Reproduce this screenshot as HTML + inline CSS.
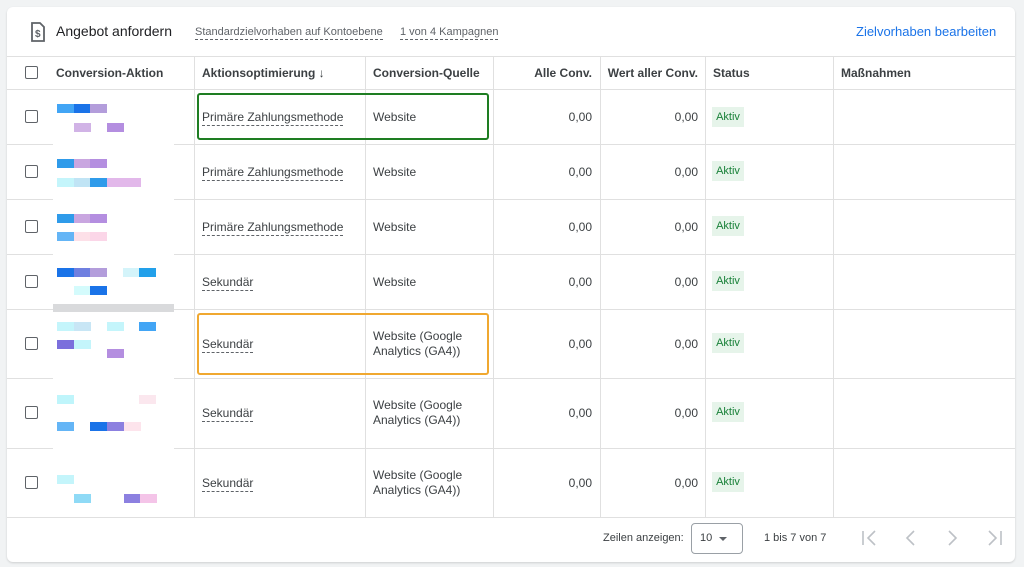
<!DOCTYPE html>
<html><head><meta charset="utf-8"><style>
*{margin:0;padding:0;box-sizing:border-box}
body{width:1024px;height:567px;background:#f1f3f4;font-family:"Liberation Sans",Arial,sans-serif;position:relative;overflow:hidden;color:#3c4043}
.card{position:absolute;left:7px;top:7px;width:1008px;height:555px;background:#fff;border-radius:6px;box-shadow:0 1px 2px rgba(0,0,0,.15)}
.a{position:absolute}
.h{position:absolute;height:1px;background:#e0e0e0;left:7px;width:1008px}
.v{position:absolute;width:1px;background:#e0e0e0;top:57px;height:460px}
.cb{position:absolute;left:25px;width:13px;height:13px;border:1.6px solid #5f6368;border-radius:2px}
.t{position:absolute;font-size:12px;color:#3c4043;white-space:nowrap}
.th{font-weight:bold;font-size:12px;color:#3c4043}
.u{border-bottom:1px dashed #5f6368;padding-bottom:1px}
.b{position:absolute;width:17px;height:9px}
.st{position:absolute;left:712px;width:32px;height:20px;background:#e6f4ea;color:#188038;font-size:11px;line-height:20px;text-align:center}
.r{text-align:right}
</style></head><body>
<div class="card"></div>
<svg class="a" style="left:30px;top:22px" width="16" height="20" viewBox="0 0 16 20"><path d="M2 1h8l4 4v14H2z" fill="none" stroke="#5f6368" stroke-width="1.8"/><text x="5" y="15" font-size="10" font-family="Liberation Sans" fill="#5f6368" font-weight="bold">$</text></svg>
<div class="t" style="left:56px;top:23px;font-size:14px;color:#202124">Angebot anfordern</div>
<div class="t u" style="left:195px;top:26px;font-size:11px;color:#5f6368">Standardzielvorhaben auf Kontoebene</div>
<div class="t u" style="left:400px;top:26px;font-size:11px;color:#5f6368">1 von 4 Kampagnen</div>
<div class="t" style="left:856px;top:24px;font-size:13px;color:#1a73e8">Zielvorhaben bearbeiten</div>
<div class="h" style="top:56px"></div><div class="h" style="top:89px"></div>
<div class="h" style="top:144px"></div><div class="h" style="top:199px"></div><div class="h" style="top:254px"></div>
<div class="h" style="top:309px"></div><div class="h" style="top:378px"></div><div class="h" style="top:448px"></div><div class="h" style="top:517px"></div>
<div class="v" style="left:194px"></div><div class="v" style="left:365px"></div><div class="v" style="left:493px"></div>
<div class="v" style="left:600px"></div><div class="v" style="left:705px"></div><div class="v" style="left:833px"></div>
<div class="a" style="left:53px;top:90px;width:121px;height:427px;background:#fff"></div>
<div class="a" style="left:53px;top:304px;width:121px;height:8px;background:#d9dadc"></div>
<div class="cb" style="top:66px"></div>
<div class="t th" style="left:56px;top:66px">Conversion-Aktion</div>
<div class="t th" style="left:202px;top:66px">Aktionsoptimierung <span style="font-weight:normal">↓</span></div>
<div class="t th" style="left:373px;top:66px">Conversion-Quelle</div>
<div class="t th r" style="left:500px;width:92px;top:66px">Alle Conv.</div>
<div class="t th r" style="left:600px;width:98px;top:66px">Wert aller Conv.</div>
<div class="t th" style="left:713px;top:66px">Status</div>
<div class="t th" style="left:841px;top:66px">Maßnahmen</div>
<div class="cb" style="top:110px"></div><div class="cb" style="top:165px"></div><div class="cb" style="top:220px"></div><div class="cb" style="top:275px"></div><div class="cb" style="top:337px"></div><div class="cb" style="top:406px"></div><div class="cb" style="top:476px"></div>
<div class="t u" style="left:202px;top:110px">Primäre Zahlungsmethode</div>
<div class="t u" style="left:202px;top:165px">Primäre Zahlungsmethode</div>
<div class="t u" style="left:202px;top:220px">Primäre Zahlungsmethode</div>
<div class="t u" style="left:202px;top:275px">Sekundär</div>
<div class="t u" style="left:202px;top:337px">Sekundär</div>
<div class="t u" style="left:202px;top:406px">Sekundär</div>
<div class="t u" style="left:202px;top:476px">Sekundär</div>
<div class="t" style="left:373px;top:110px">Website</div>
<div class="t" style="left:373px;top:165px">Website</div>
<div class="t" style="left:373px;top:220px">Website</div>
<div class="t" style="left:373px;top:275px">Website</div>
<div class="t" style="left:373px;top:329px;line-height:15px">Website (Google<br>Analytics (GA4))</div>
<div class="t" style="left:373px;top:398px;line-height:15px">Website (Google<br>Analytics (GA4))</div>
<div class="t" style="left:373px;top:468px;line-height:15px">Website (Google<br>Analytics (GA4))</div>
<div class="t r" style="left:500px;width:92px;top:110px">0,00</div><div class="t r" style="left:600px;width:98px;top:110px">0,00</div>
<div class="t r" style="left:500px;width:92px;top:165px">0,00</div><div class="t r" style="left:600px;width:98px;top:165px">0,00</div>
<div class="t r" style="left:500px;width:92px;top:220px">0,00</div><div class="t r" style="left:600px;width:98px;top:220px">0,00</div>
<div class="t r" style="left:500px;width:92px;top:275px">0,00</div><div class="t r" style="left:600px;width:98px;top:275px">0,00</div>
<div class="t r" style="left:500px;width:92px;top:337px">0,00</div><div class="t r" style="left:600px;width:98px;top:337px">0,00</div>
<div class="t r" style="left:500px;width:92px;top:406px">0,00</div><div class="t r" style="left:600px;width:98px;top:406px">0,00</div>
<div class="t r" style="left:500px;width:92px;top:476px">0,00</div><div class="t r" style="left:600px;width:98px;top:476px">0,00</div>
<div class="st" style="top:107px">Aktiv</div><div class="st" style="top:161px">Aktiv</div><div class="st" style="top:216px">Aktiv</div><div class="st" style="top:271px">Aktiv</div><div class="st" style="top:333px">Aktiv</div><div class="st" style="top:402px">Aktiv</div><div class="st" style="top:472px">Aktiv</div>
<div class="a" style="left:197px;top:93px;width:292px;height:47px;border:2.5px solid #1e7d22;border-radius:3px"></div>
<div class="a" style="left:197px;top:313px;width:292px;height:62px;border:2.5px solid #f0a830;border-radius:3px"></div>
<div class="b" style="left:57px;top:104px;background:#42a5f5"></div><div class="b" style="left:74px;top:104px;background:#1a73e8"></div><div class="b" style="left:90px;top:104px;background:#b39ddb"></div>
<div class="b" style="left:74px;top:123px;background:#d1b3e6"></div><div class="b" style="left:107px;top:123px;background:#b48ee0"></div>
<div class="b" style="left:57px;top:159px;background:#2f9bea"></div><div class="b" style="left:74px;top:159px;background:#c9a6e0"></div><div class="b" style="left:90px;top:159px;background:#b48ee0"></div>
<div class="b" style="left:57px;top:178px;background:#c4f5fb"></div><div class="b" style="left:74px;top:178px;background:#c0e4f5"></div><div class="b" style="left:90px;top:178px;background:#2f9bea"></div><div class="b" style="left:107px;top:178px;background:#e2b8ea"></div><div class="b" style="left:124px;top:178px;background:#e2b8ea"></div>
<div class="b" style="left:57px;top:214px;background:#2f9bea"></div><div class="b" style="left:74px;top:214px;background:#c9a6e0"></div><div class="b" style="left:90px;top:214px;background:#b48ee0"></div>
<div class="b" style="left:57px;top:232px;background:#64b5f6"></div><div class="b" style="left:74px;top:232px;background:#fde0e8"></div><div class="b" style="left:90px;top:232px;background:#fbd6e8"></div>
<div class="b" style="left:57px;top:268px;background:#1a73e8"></div><div class="b" style="left:74px;top:268px;background:#6f7fe0"></div><div class="b" style="left:90px;top:268px;background:#b39ddb"></div><div class="b" style="left:123px;top:268px;background:#d4f4fa"></div><div class="b" style="left:139px;top:268px;background:#22a0ea"></div>
<div class="b" style="left:74px;top:286px;background:#d4fbfc"></div><div class="b" style="left:90px;top:286px;background:#1a73e8"></div>
<div class="b" style="left:57px;top:322px;background:#c4f5fb"></div><div class="b" style="left:74px;top:322px;background:#c8e6f5"></div><div class="b" style="left:107px;top:322px;background:#c4f5fb"></div><div class="b" style="left:139px;top:322px;background:#42a5f5"></div>
<div class="b" style="left:57px;top:340px;background:#7b6fdc"></div><div class="b" style="left:74px;top:340px;background:#c4f5fb"></div><div class="b" style="left:107px;top:349px;background:#b48ee0"></div>
<div class="b" style="left:57px;top:395px;background:#bff5fb"></div><div class="b" style="left:139px;top:395px;background:#fbe7ee"></div>
<div class="b" style="left:57px;top:422px;background:#64b5f6"></div><div class="b" style="left:90px;top:422px;background:#1a73e8"></div><div class="b" style="left:107px;top:422px;background:#8c80e0"></div><div class="b" style="left:124px;top:422px;background:#fde4ec"></div>
<div class="b" style="left:57px;top:475px;background:#c4f5fb"></div><div class="b" style="left:74px;top:494px;background:#8fdaf6"></div><div class="b" style="left:124px;top:494px;background:#8c80e0"></div><div class="b" style="left:140px;top:494px;background:#f4c4e8"></div>
<div class="t" style="left:603px;top:532px;font-size:11px">Zeilen anzeigen:</div>
<div class="a" style="left:691px;top:523px;width:52px;height:31px;border:1px solid #9aa0a6;border-radius:4px"></div>
<div class="t" style="left:700px;top:532px;font-size:11px">10</div>
<div class="a" style="left:719px;top:537px;width:0;height:0;border-left:4px solid transparent;border-right:4px solid transparent;border-top:4px solid #5f6368"></div>
<div class="t" style="left:764px;top:532px;font-size:11px">1 bis 7 von 7</div>
<svg class="a" style="left:855px;top:527px" width="160" height="22" viewBox="0 0 160 22" fill="none" stroke="#bdc1c6" stroke-width="1.6"><path d="M8 4v14M20 4l-7 7 7 7"/><path d="M59 4l-7 7 7 7"/><path d="M94 4l7 7-7 7"/><path d="M134 4l7 7-7 7M146 4v14"/></svg>
</body></html>
